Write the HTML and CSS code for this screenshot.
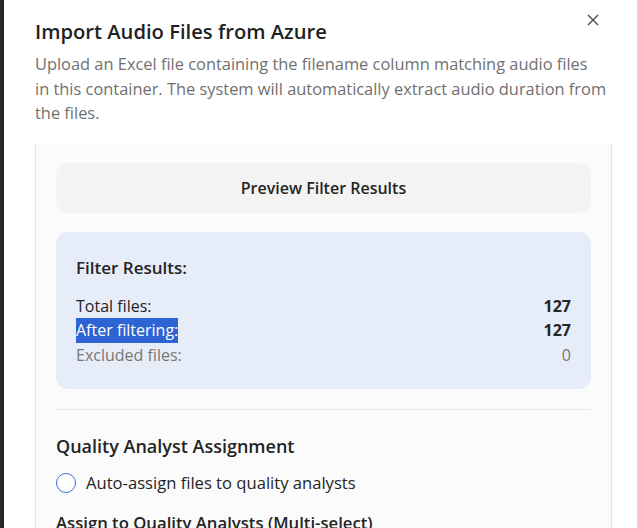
FILE: index.html
```html
<!DOCTYPE html>
<html lang="en">
<head>
<meta charset="utf-8">
<title>Import Audio Files from Azure</title>
<link rel="stylesheet" href="styles.css">
</head>
<body>
<div class="backdrop"></div>
<div class="dialog">
  <button class="close" aria-label="Close">
    <svg width="12" height="12" viewBox="0 0 12 12"><path d="M1 1L11 11M11 1L1 11" stroke="#4a4a4a" stroke-width="1.4" fill="none"/></svg>
  </button>
  <h1 class="title">Import Audio Files from Azure</h1>
  <p class="desc">Upload an Excel file containing the filename column matching audio files<br>in this container. The system will automatically extract audio duration from the files.</p>
  <div class="scroll">
    <button class="preview">Preview Filter Results</button>
    <div class="results">
      <div class="results-title">Filter Results:</div>
      <div class="row"><span>Total files:</span><b>127</b></div>
      <div class="row"><span class="sel">After filtering:</span><b>127</b></div>
      <div class="row muted"><span>Excluded files:</span><span>0</span></div>
    </div>
    <hr class="divider">
    <h2 class="section">Quality Analyst Assignment</h2>
    <label class="radio-row"><span class="radio"></span><span>Auto-assign files to quality analysts</span></label>
    <h3 class="sub">Assign to Quality Analysts (Multi-select)</h3>
  </div>
</div>
</body>
</html>
```
FILE: styles.css
```css
* { box-sizing: border-box; }
html, body { margin: 0; height: 100%; }
body {
  display: flex;
  overflow: hidden;
  background: #2b2b2b;
  font-family: "Open Sans", "Noto Sans", sans-serif;
  color: #242424;
}
.backdrop { width: 4px; flex: none; background: #2b2b2b; }
.dialog {
  position: relative;
  flex: 1;
  background: #ffffff;
  padding: 17px 25px 0 31px;
  box-shadow: -1px 0 3px rgba(0,0,0,0.3);
}
.close {
  position: absolute;
  top: 14px;
  right: 38px;
  width: 12px;
  height: 12px;
  padding: 0;
  border: 0;
  background: none;
  display: flex;
}
.title {
  margin: 0;
  font-size: 20.2px;
  line-height: 28px;
  font-weight: 600;
  color: #1f1f1f;
}
.desc {
  margin: 7px 0 0;
  font-size: 16.4px;
  line-height: 24.5px;
  color: #707070;
}
.scroll {
  margin-top: 18px;
  background: #fbfbfb;
  border-left: 1px solid #e3e3e3;
  border-right: 1px solid #e3e3e3;
  padding: 19px 20px 0;
  height: 400px;
}
.preview {
  display: block;
  width: 100%;
  height: 50px;
  border: 0;
  border-radius: 12px;
  background: #f3f3f2;
  font-family: inherit;
  font-size: 16px;
  font-weight: 600;
  color: #242424;
}
.results {
  margin-top: 19px;
  background: #e7edf8;
  border-radius: 12px;
  padding: 24px 20px 21px;
}
.results-title {
  font-size: 17px;
  font-weight: 600;
  line-height: 24px;
  margin-bottom: 14px;
}
.row {
  display: flex;
  justify-content: space-between;
  font-size: 16px;
  line-height: 24.5px;
  color: #242424;
}
.row b { font-weight: 700; }
.row.muted { color: #777777; }
.sel { background: #2d63d2; color: #ffffff; display: inline-block; line-height: 25px; }
.divider {
  margin: 20px 0 0;
  border: 0;
  border-top: 1px solid #e6e6e6;
}
.section {
  margin: 23px 0 0;
  font-size: 18px;
  line-height: 26px;
  font-weight: 600;
}
.radio-row {
  display: flex;
  align-items: center;
  gap: 10px;
  margin-top: 12px;
  font-size: 16.6px;
  line-height: 24px;
}
.radio {
  flex: none;
  width: 20px;
  height: 20px;
  border: 1.5px solid #3b6fd6;
  border-radius: 50%;
  background: #fff;
}
.sub {
  margin: 16px 0 0;
  font-size: 16.7px;
  line-height: 24px;
  font-weight: 600;
}
```
